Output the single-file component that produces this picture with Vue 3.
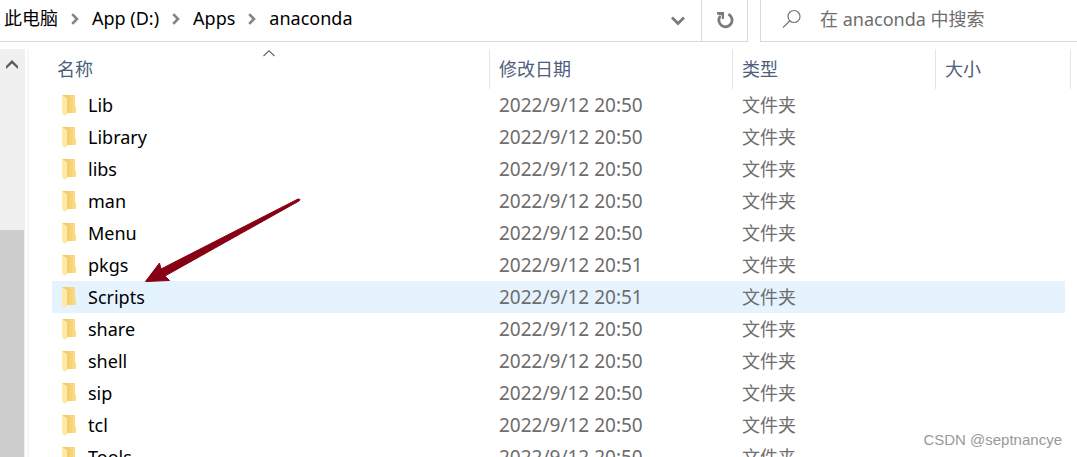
<script setup>
import { ref } from 'vue'

const crumbs = ['此电脑', 'App (D:)', 'Apps', 'anaconda']
const query = ref('')
const selected = ref('Scripts')
const columns = [
  { key: 'name', label: '名称' },
  { key: 'date', label: '修改日期' },
  { key: 'type', label: '类型' },
  { key: 'size', label: '大小' },
]
const names = ['Lib', 'Library', 'libs', 'man', 'Menu', 'pkgs', 'Scripts', 'share', 'shell', 'sip', 'tcl', 'Tools']
const files = names.map((name) => ({
  name,
  date: name === 'pkgs' || name === 'Scripts' ? '2022/9/12 20:51' : '2022/9/12 20:50',
  type: '文件夹',
}))
</script>

<template>
  <div class="explorer">
    <header class="toolbar">
      <div class="address">
        <nav class="crumbs" aria-label="路径">
          <template v-for="(crumb, i) in crumbs" :key="crumb">
            <svg v-if="i" class="sep" viewBox="0 0 8 12" aria-hidden="true">
              <path d="M1.2 1.2 L6 6 L1.2 10.8" fill="none" stroke="#848484" stroke-width="2.6" />
            </svg>
            <button class="crumb" type="button">{{ crumb }}</button>
          </template>
        </nav>
        <button class="history" type="button" aria-label="以前的位置">
          <svg width="16" height="12" viewBox="0 0 16 12" aria-hidden="true">
            <path d="M2 2.5 L8 8.5 L14 2.5" fill="none" stroke="#7b7b7b" stroke-width="2.8" />
          </svg>
        </button>
        <button class="refresh" type="button" aria-label="刷新">
          <svg width="18" height="18" viewBox="0 0 18 18" aria-hidden="true">
            <path d="M12.4 3.2 A6.6 6.6 0 1 1 4.3 5" fill="none" stroke="#7b7b7b" stroke-width="2.8" />
            <path d="M1 1 H8 V8 H5.8 V4.4 L1 3.4 Z" fill="#7b7b7b" />
          </svg>
        </button>
      </div>
      <label class="search">
        <svg width="20" height="20" viewBox="0 0 20 20" aria-hidden="true">
          <circle cx="12" cy="7.5" r="6" fill="none" stroke="#757575" stroke-width="1.2" />
          <path d="M7.8 11.8 L1 18.6" stroke="#757575" stroke-width="1.3" />
        </svg>
        <input v-model="query" type="text" placeholder="在 anaconda 中搜索" aria-label="在 anaconda 中搜索" />
      </label>
    </header>

    <main class="body">
      <div class="scroll">
        <button class="up" type="button" aria-label="向上滚动">
          <svg width="12" height="9" viewBox="0 0 12 9" aria-hidden="true">
            <path d="M0 6 L6 0 L12 6 V9 L6 3.6 L0 9 Z" fill="#5c5c5c" />
          </svg>
        </button>
        <div class="thumb"></div>
      </div>
      <div class="listing">
        <table>
          <colgroup>
            <col class="c-name" />
            <col class="c-date" />
            <col class="c-type" />
            <col />
          </colgroup>
          <thead>
            <tr>
              <th v-for="col in columns" :key="col.key" scope="col">
                <button type="button">{{ col.label }}</button>
                <svg v-if="col.key === 'name'" class="sort" width="12" height="7" viewBox="0 0 12 7" aria-hidden="true">
                  <path d="M0.5 6 L6 0.8 L11.5 6" fill="none" stroke="#666" stroke-width="1.1" />
                </svg>
              </th>
            </tr>
          </thead>
          <tbody>
            <tr v-for="file in files" :key="file.name" :class="{ selected: file.name === selected }" @click="selected = file.name">
              <td class="name">
                <div class="entry">
                  <svg width="16" height="22" viewBox="0 0 16 22" aria-hidden="true">
                    <defs>
                      <linearGradient id="folder-back" x1="0" x2="1">
                        <stop offset="0.3" stop-color="#eeca6c" />
                        <stop offset="1" stop-color="#ffdd84" />
                      </linearGradient>
                    </defs>
                    <path d="M1 1 H14 V12 L15 13 V19 H1 Z" fill="url(#folder-back)" />
                    <path d="M1 1 L6 4 V20 L5 21 L4 22 L1 19 Z" fill="#ffe9a6" />
                  </svg>
                  <span>{{ file.name }}</span>
                </div>
              </td>
              <td>{{ file.date }}</td>
              <td class="type">{{ file.type }}</td>
              <td></td>
            </tr>
          </tbody>
        </table>
      </div>
    </main>

    <svg class="arrow" width="156" height="86" viewBox="0 0 156 86" aria-hidden="true">
      <path d="M0.5 83.5 L14.5 65 L16 71 L153 1 L155 1.5 L154 3 L20 78 L24.5 82.5 Z" fill="#870014" stroke="#870014" stroke-width="1" stroke-linejoin="round" />
    </svg>
    <div class="watermark">CSDN @septnancye</div>
  </div>
</template>

<style>
body {
  background: #fff;
}
</style>

<style scoped>
.explorer {
  position: relative;
  display: flex;
  flex-direction: column;
  height: 100vh;
  overflow: hidden;
  background: #fff;
  color: #000;
  font-family: "Noto Sans", "Noto Sans CJK SC", sans-serif;
  font-size: 18px;
  line-height: 24px;
}
.explorer * {
  box-sizing: border-box;
}
button {
  margin: 0;
  padding: 0;
  border: 0;
  background: none;
  color: inherit;
  font: inherit;
}
.toolbar {
  flex: none;
  display: flex;
  gap: 12px;
  height: 42px;
}
.address {
  flex: 1;
  min-width: 0;
  display: flex;
  border-right: 1px solid #d9d9d9;
  border-bottom: 1px solid #d9d9d9;
}
.crumbs {
  flex: 1;
  display: flex;
  align-items: center;
  gap: 13px;
  padding: 0 0 5px 4px;
}
.crumb {
  white-space: nowrap;
}
.sep {
  width: 8px;
  height: 12px;
  margin-top: 2px;
}
.history,
.refresh {
  display: flex;
  align-items: center;
  justify-content: center;
  width: 46px;
}
.refresh {
  border-left: 1px solid #d9d9d9;
  padding-bottom: 2px;
}
.search {
  flex: none;
  width: 317px;
  display: flex;
  align-items: center;
  gap: 18px;
  padding: 0 0 4px 21px;
  border-left: 1px solid #d9d9d9;
  border-bottom: 1px solid #d9d9d9;
}
.search input {
  flex: 1;
  min-width: 0;
  padding: 0;
  border: 0;
  outline: 0;
  background: none;
  color: #000;
  font: inherit;
}
.search input::placeholder {
  color: #6e6e6e;
  opacity: 1;
}
.body {
  flex: 1;
  min-height: 0;
  display: flex;
  padding-top: 7px;
}
.scroll {
  flex: none;
  display: flex;
  flex-direction: column;
  width: 25px;
  padding-right: 1px;
  background: #f0f0f0;
}
.up {
  display: flex;
  justify-content: center;
  align-items: center;
  height: 30px;
}
.thumb {
  flex: 1;
  margin-top: 151px;
  background: #cdcdcd;
}
.listing {
  flex: 1;
  min-width: 0;
  margin-left: 2px;
  padding: 0 6px 0 23px;
  border-left: 2px solid #f7f7f7;
}
table {
  width: 100%;
  table-layout: fixed;
  border-spacing: 0;
}
.c-name {
  width: 438px;
}
.c-date {
  width: 243px;
}
.c-type {
  width: 203px;
}
th {
  position: relative;
  height: 40px;
  padding: 0 9px;
  border-right: 1px solid #e5e5e5;
  color: #4c607a;
  font-weight: 400;
  text-align: left;
}
th:first-child {
  padding-left: 5px;
}
.sort {
  position: absolute;
  top: 1px;
  left: 50%;
  margin-left: -8px;
}
td {
  height: 32px;
  padding: 0 9px;
  color: #6d6d6d;
  font-size: 19px;
  white-space: nowrap;
}
td.type {
  font-size: 18px;
}
td.name {
  color: #000;
  font-size: 18px;
}
td:last-child {
  border-right: 6px solid #fff;
}
.entry {
  display: flex;
  align-items: center;
  gap: 11px;
}
.selected td {
  background: #e5f3ff;
}
.arrow {
  position: absolute;
  top: 198px;
  left: 145px;
  pointer-events: none;
}
.watermark {
  position: absolute;
  right: 15px;
  bottom: 5px;
  color: #999;
  font-family: "Liberation Sans", Arial, sans-serif;
  font-size: 15px;
}
</style>
